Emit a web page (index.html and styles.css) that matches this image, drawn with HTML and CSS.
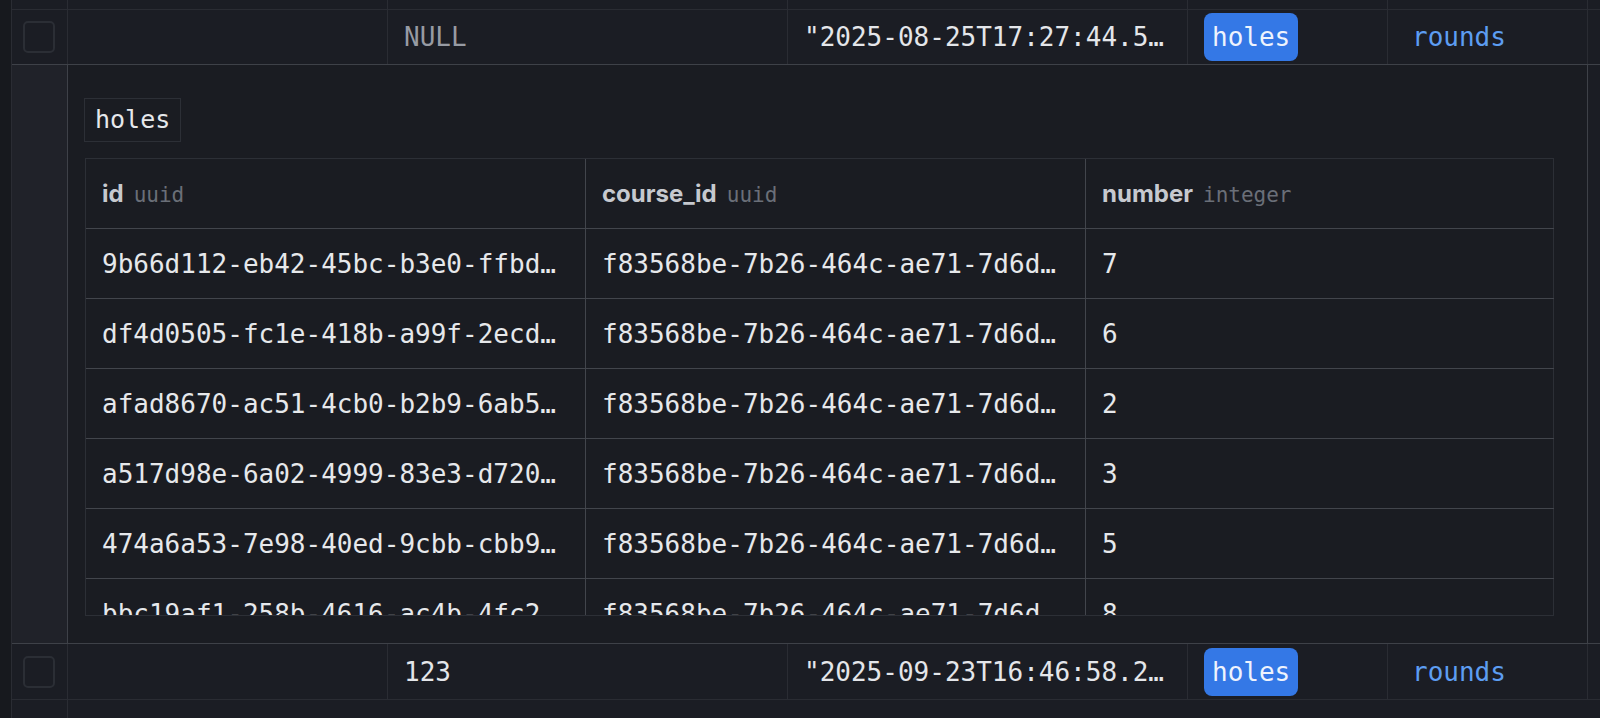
FILE: index.html
```html
<!DOCTYPE html>
<html>
<head>
<meta charset="utf-8">
<title>holes</title>
<link rel="stylesheet" href="styles.css">
</head>
<body>
<div class="page">
  <div class="gutter"></div>
  <div class="grid">
    <div class="row row-stub-top">
      <div class="cell c-check"></div>
      <div class="cell c-a"></div>
      <div class="cell c-b"></div>
      <div class="cell c-c"></div>
      <div class="cell c-d"></div>
      <div class="cell c-e"></div>
      <div class="cell c-rest"></div>
    </div>

    <div class="row row-main">
      <div class="cell c-check"><span class="checkbox"></span></div>
      <div class="cell c-a"></div>
      <div class="cell c-b"><span class="val null">NULL</span></div>
      <div class="cell c-c"><span class="val">"2025-08-25T17:27:44.5…</span></div>
      <div class="cell c-d"><span class="rel rel-active">holes</span></div>
      <div class="cell c-e"><span class="rel">rounds</span></div>
      <div class="cell c-rest"></div>
    </div>

    <div class="expand">
      <div class="expand-strip"></div>
      <div class="panel">
        <div class="panel-label">holes</div>
        <div class="subtable">
          <div class="sub-scroll">
            <div class="sub-row sub-head">
              <div class="sub-cell s1"><span class="col-name">id</span><span class="col-type">uuid</span></div>
              <div class="sub-cell s2"><span class="col-name">course_id</span><span class="col-type">uuid</span></div>
              <div class="sub-cell s3"><span class="col-name">number</span><span class="col-type">integer</span></div>
            </div>
            <div class="sub-row">
              <div class="sub-cell s1">9b66d112-eb42-45bc-b3e0-ffbd…</div>
              <div class="sub-cell s2">f83568be-7b26-464c-ae71-7d6d…</div>
              <div class="sub-cell s3">7</div>
            </div>
            <div class="sub-row">
              <div class="sub-cell s1">df4d0505-fc1e-418b-a99f-2ecd…</div>
              <div class="sub-cell s2">f83568be-7b26-464c-ae71-7d6d…</div>
              <div class="sub-cell s3">6</div>
            </div>
            <div class="sub-row">
              <div class="sub-cell s1">afad8670-ac51-4cb0-b2b9-6ab5…</div>
              <div class="sub-cell s2">f83568be-7b26-464c-ae71-7d6d…</div>
              <div class="sub-cell s3">2</div>
            </div>
            <div class="sub-row">
              <div class="sub-cell s1">a517d98e-6a02-4999-83e3-d720…</div>
              <div class="sub-cell s2">f83568be-7b26-464c-ae71-7d6d…</div>
              <div class="sub-cell s3">3</div>
            </div>
            <div class="sub-row">
              <div class="sub-cell s1">474a6a53-7e98-40ed-9cbb-cbb9…</div>
              <div class="sub-cell s2">f83568be-7b26-464c-ae71-7d6d…</div>
              <div class="sub-cell s3">5</div>
            </div>
            <div class="sub-row">
              <div class="sub-cell s1">bbc19af1-258b-4616-ac4b-4fc2…</div>
              <div class="sub-cell s2">f83568be-7b26-464c-ae71-7d6d…</div>
              <div class="sub-cell s3">8</div>
            </div>
          </div>
          <div class="sub-footer"></div>
        </div>
      </div>
      <div class="expand-rest"></div>
    </div>

    <div class="row row-main row-after">
      <div class="cell c-check"><span class="checkbox"></span></div>
      <div class="cell c-a"></div>
      <div class="cell c-b"><span class="val">123</span></div>
      <div class="cell c-c"><span class="val">"2025-09-23T16:46:58.2…</span></div>
      <div class="cell c-d"><span class="rel rel-active">holes</span></div>
      <div class="cell c-e"><span class="rel">rounds</span></div>
      <div class="cell c-rest"></div>
    </div>

    <div class="row row-stub-bottom">
      <div class="cell c-check"></div>
      <div class="cell c-wide"></div>
    </div>
  </div>
</div>
</body>
</html>
```

FILE: styles.css
```css
* {
  box-sizing: border-box;
}

html, body {
  margin: 0;
  padding: 0;
  background: #1b1d24;
  overflow: hidden;
}

body {
  width: 1600px;
  height: 718px;
  font-family: "DejaVu Sans Mono", monospace;
  color: #e4e6ea;
}

.page {
  display: flex;
  height: 718px;
}

.gutter {
  width: 11px;
  flex: none;
  background: #17191e;
}

.grid {
  flex: 1;
  display: flex;
  flex-direction: column;
  border-left: 1px solid #2a2c33;
  min-width: 0;
}

.row {
  display: flex;
  flex: none;
}

.row-stub-top {
  height: 10px;
  border-bottom: 1px solid #2a2c33;
}

.row-main {
  height: 54px;
}

.row-after {
  height: 56px;
  border-bottom: 1px solid #2a2c33;
}

.row-stub-bottom {
  flex: 1;
}

.cell {
  flex: none;
  display: flex;
  align-items: center;
  border-right: 1px solid #2a2c33;
  padding: 0 16px;
  overflow: hidden;
  white-space: nowrap;
}

.c-check {
  width: 56px;
  padding: 0 0 0 11px;
}

.c-a { width: 320px; }
.c-b { width: 400px; }
.c-c { width: 400px; }
.c-d { width: 200px; }
.c-e { width: 200px; }

.c-rest {
  flex: 1;
  border-right: none;
}

.c-wide {
  flex: 1;
  border-right: none;
}

.checkbox {
  display: block;
  width: 32px;
  height: 32px;
  border: 2px solid #2b2e35;
  border-radius: 5px;
}

.val {
  font-size: 26px;
  line-height: 30px;
  color: #e4e6ea;
}

.val.null {
  color: #979ba3;
}

.rel {
  display: inline-flex;
  align-items: center;
  height: 48px;
  padding: 0 8px;
  border-radius: 8px;
  font-size: 26px;
  color: #5d9df2;
}

.rel-active {
  background: #3478e6;
  color: #eef3fd;
}

/* expanded related rows */
.expand {
  display: flex;
  flex: none;
  height: 580px;
  border-top: 1px solid #3e4148;
  border-bottom: 1px solid #3e4148;
}

.expand-strip {
  width: 55px;
  flex: none;
  background: #202229;
}

.panel {
  width: 1521px;
  flex: none;
  border-left: 1px solid #3e4148;
  border-right: 1px solid #3e4148;
  background: #1a1c22;
  padding: 33px 0 0 16px;
  display: flex;
  flex-direction: column;
  align-items: flex-start;
}

.expand-rest {
  flex: 1;
}

.panel-label {
  height: 44px;
  padding: 0 10px 0 10px;
  border: 1px solid #2c2f36;
  font-size: 25px;
  line-height: 42px;
  color: #e6e8eb;
}

.subtable {
  margin-top: 16px;
  margin-left: 1px;
  width: 1469px;
}

.sub-scroll {
  height: 457px;
  overflow: hidden;
  border-top: 1px solid #2c2f36;
  border-left: 1px solid #2c2f36;
}

.sub-row {
  display: flex;
  height: 70px;
  border-bottom: 1px solid #42454c;
}

.sub-cell {
  flex: none;
  display: flex;
  align-items: center;
  padding: 0 16px;
  border-right: 1px solid #42454c;
  font-size: 26px;
  color: #e6e8eb;
  white-space: nowrap;
  overflow: hidden;
}

.s1 { width: 500px; }
.s2 { width: 500px; }
.s3 {
  width: 468px;
  border-right-color: #2c2f36;
}

.sub-head .sub-cell {
  align-items: baseline;
  padding-top: 20px;
}

.col-name {
  font-family: "Inter", "Liberation Sans", sans-serif;
  font-weight: 700;
  font-size: 24px;
  color: #c6c9cf;
}

.col-type {
  margin-left: 10px;
  font-size: 21px;
  color: #6a6f78;
}

.sub-footer {
  height: 28px;
  border-top: 1px solid #2c2f36;
}
```
